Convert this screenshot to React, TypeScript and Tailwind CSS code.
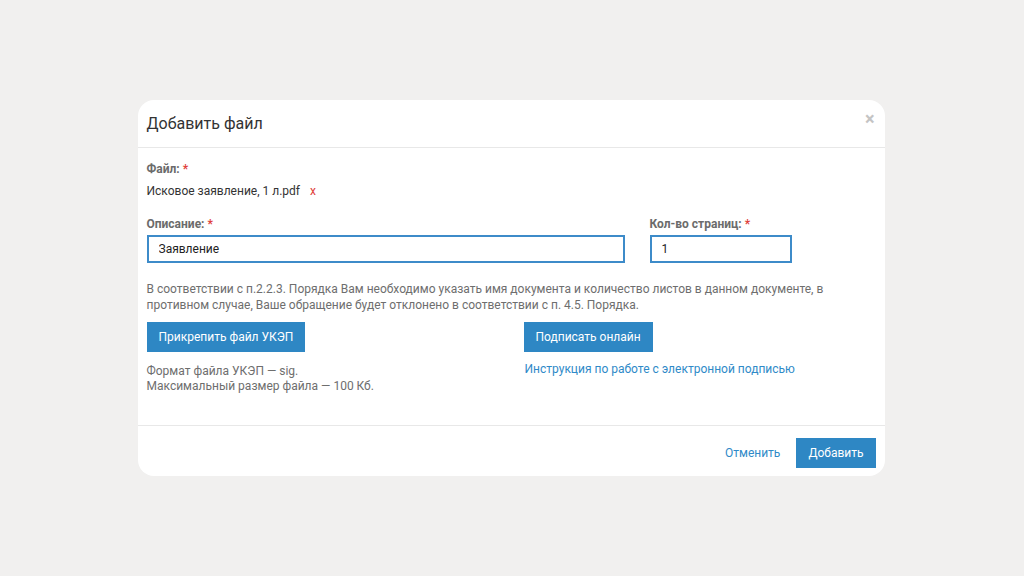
import React from 'react';

export default function App() {
  return (
    <div className="h-[576px] w-full bg-[#f1f0ef] flex items-center justify-center font-['Roboto',sans-serif] text-[12px] text-[#333]">
      <div className="w-[747px] -translate-x-[1px] bg-white rounded-[16px] flex flex-col">
        {/* Header */}
        <div className="h-[48px] px-[9px] flex items-center justify-between border-b border-[#e8e8e8]">
          <h1 className="text-[16px] text-[#333] leading-none">Добавить файл</h1>
          <button className="text-[#c4c4c4] text-[18px] font-bold leading-none mr-[1px] mb-[9px]">×</button>
        </div>

        {/* Body */}
        <div className="px-[9px] pt-[13px] pb-[31px] border-b border-[#e8e8e8]">
          <div className="leading-[16px] font-bold text-[#6b6b6b]">
            Файл: <span className="text-[#e0403a]">*</span>
          </div>
          <div className="mt-[6px] leading-[16px] flex items-center">
            <span>Исковое заявление, 1 л.pdf</span>
            <span className="ml-[10px] text-[#e0403a]">x</span>
          </div>

          <div className="mt-[17px] flex gap-[25px]">
            <div className="w-[478px]">
              <div className="leading-[16px] font-bold text-[#6b6b6b]">
                Описание: <span className="text-[#e0403a]">*</span>
              </div>
              <input
                defaultValue="Заявление"
                className="mt-[3px] w-full h-[28px] border-2 border-[#3d8bc9] px-[10px] text-[12px] text-[#222] outline-none"
              />
            </div>
            <div className="w-[142px]">
              <div className="leading-[16px] font-bold text-[#6b6b6b] whitespace-nowrap">
                Кол-во страниц: <span className="text-[#e0403a]">*</span>
              </div>
              <input
                defaultValue="1"
                className="mt-[3px] w-full h-[28px] border-2 border-[#3d8bc9] px-[10px] text-[12px] text-[#222] outline-none"
              />
            </div>
          </div>

          <p className="mt-[18px] leading-[16px] text-[#6e6e6e] w-[700px]">
            В соответствии с п.2.2.3. Порядка Вам необходимо указать имя документа и количество листов в данном документе, в противном случае, Ваше обращение будет отклонено в соответствии с п. 4.5. Порядка.
          </p>

          <div className="mt-[9px] flex">
            <div className="w-[377px]">
              <button className="h-[30px] px-[12px] bg-[#2e87c4] text-white text-[12px]">Прикрепить файл УКЭП</button>
              <div className="mt-[12px] leading-[15px] text-[#6e6e6e]">
                <div>Формат файла УКЭП — sig.</div>
                <div>Максимальный размер файла — 100 Кб.</div>
              </div>
            </div>
            <div>
              <button className="h-[30px] px-[12px] bg-[#2e87c4] text-white text-[12px]">Подписать онлайн</button>
              <div className="mt-[9px] leading-[16px] text-[#2f8ac8] ml-[1px]">
                Инструкция по работе с электронной подписью
              </div>
            </div>
          </div>
        </div>

        {/* Footer */}
        <div className="px-[9px] pt-[12px] pb-[8px] flex items-center justify-end gap-[16px]">
          <button className="text-[#2f8ac8] text-[12px]">Отменить</button>
          <button className="h-[30px] px-[12px] bg-[#2e87c4] text-white text-[12px]">Добавить</button>
        </div>
      </div>
    </div>
  );
}
